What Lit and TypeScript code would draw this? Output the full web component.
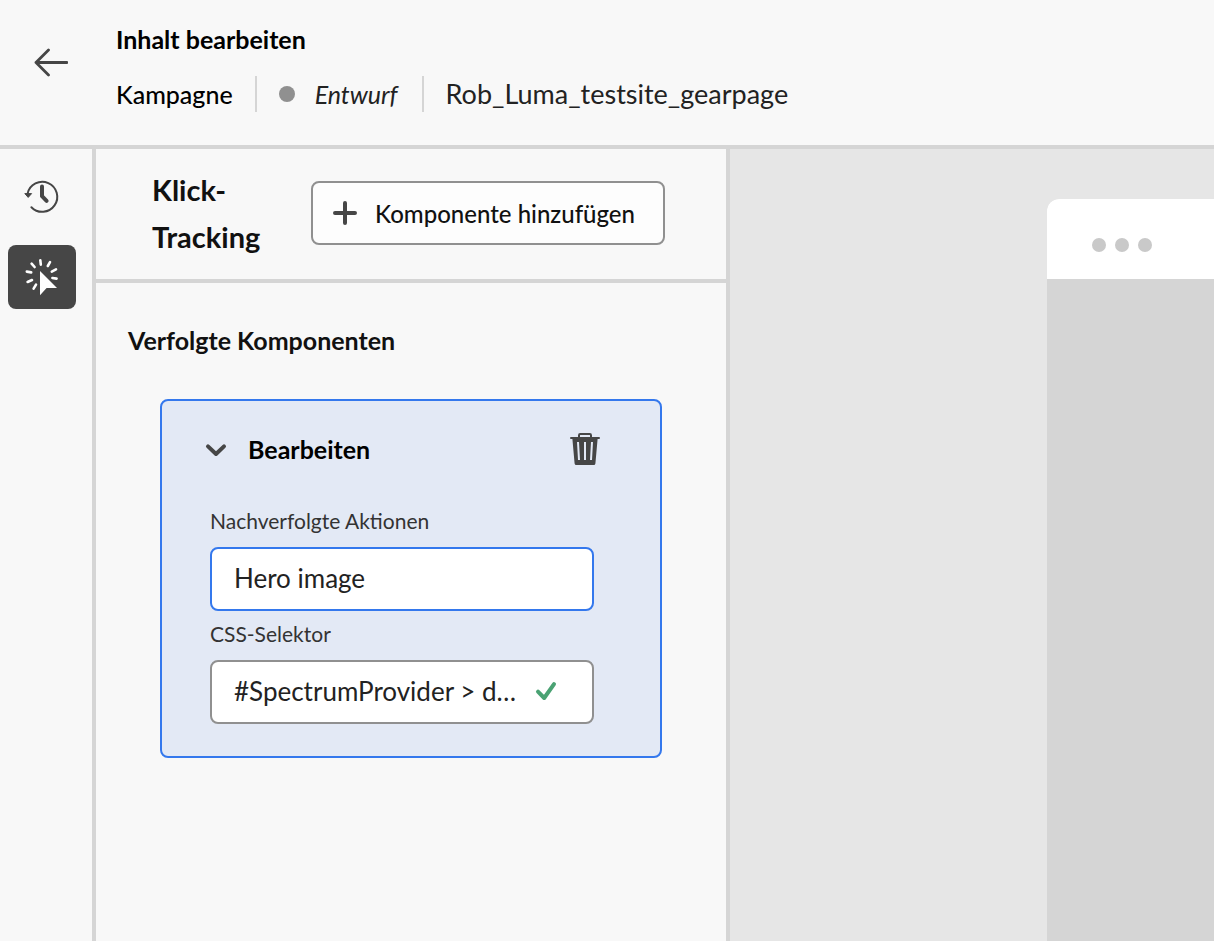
import { LitElement, html, css } from "lit";
import { customElement, state } from "lit/decorators.js";

@customElement("edit-header")
class EditHeader extends LitElement {
  static styles = css`
    :host {
      display: block;
      background: #f8f8f8;
      border-bottom: 4px solid #d5d5d5;
    }
    .bar {
      display: flex;
      align-items: flex-start;
      min-height: 145px;
      box-sizing: border-box;
      padding: 19px 32px 0;
      gap: 48px;
    }
    .back {
      border: 0;
      padding: 0;
      margin-top: 25px;
      background: none;
      cursor: pointer;
      width: 36px;
      height: 36px;
    }
    .back svg {
      display: block;
    }
    .title {
      margin: 0;
      font-size: 25px;
      line-height: 40px;
      font-weight: 700;
      color: #000;
    }
    .meta {
      display: flex;
      align-items: center;
      gap: 22px;
      margin-top: 15px;
      font-size: 27px;
      line-height: 40px;
      color: #222;
    }
    .kind {
      font-size: 25px;
      font-weight: 500;
      color: #000;
    }
    .status {
      display: flex;
      align-items: center;
      gap: 20px;
      padding: 0 24px 0 22px;
      height: 36px;
      border-left: 2px solid #d5d5d5;
      border-right: 2px solid #d5d5d5;
      font-size: 25px;
      font-style: italic;
    }
    .dot {
      width: 16px;
      height: 16px;
      border-radius: 50%;
      background: #909090;
    }
  `;

  render() {
    return html`
      <header class="bar">
        <button class="back" aria-label="Zurück">
          <svg width="36" height="36" viewBox="0 0 36 36" fill="none" stroke="#464646" stroke-width="2.8" stroke-linecap="round" stroke-linejoin="round">
            <path d="M35 18.5H4M16.5 6L4 18.5L16.5 31" />
          </svg>
        </button>
        <div>
          <h1 class="title">Inhalt bearbeiten</h1>
          <div class="meta">
            <span class="kind">Kampagne</span>
            <span class="status"><span class="dot"></span>Entwurf</span>
            <span>Rob_Luma_testsite_gearpage</span>
          </div>
        </div>
      </header>
    `;
  }
}

@customElement("tool-rail")
class ToolRail extends LitElement {
  static styles = css`
    :host {
      display: block;
      background: #f8f8f8;
      border-right: 4px solid #d5d5d5;
    }
    .rail {
      display: flex;
      flex-direction: column;
      gap: 16px;
      padding: 16px 16px 0 8px;
    }
    .tool {
      display: grid;
      place-items: center;
      width: 68px;
      height: 64px;
      padding: 0;
      border: 0;
      border-radius: 8px;
      background: none;
      cursor: pointer;
    }
    .active {
      background: #464646;
    }
  `;

  render() {
    return html`
      <nav class="rail">
        <button class="tool" aria-label="Verlauf">
          <svg width="36" height="36" viewBox="0 0 36 36" fill="none" stroke="#464646">
            <path d="M3.6 14.6A15 15 0 1 1 7.4 28.2" stroke-width="2" stroke-linecap="round" />
            <path d="M.8 14.6h6.8l-3.4 3.8z" fill="#464646" stroke-linejoin="round" />
            <path d="M18 7.6V17.2L22.6 21.8" stroke-width="4" stroke-linecap="round" stroke-linejoin="round" />
          </svg>
        </button>
        <button class="tool active" aria-label="Klick-Tracking" aria-pressed="true">
          <svg width="36" height="40" viewBox="0 0 36 40">
            <path d="M16 14V38.2L22.6 31H33Z" fill="#fff" />
            <path d="M16.3 3.2l.5 4.4M26 5.2L23.8 9M32 12.4l-4.2 2.2M32.6 21.6L28.4 21M7.6 6.6l3 3.4M2.8 14.6l4.4.8M3.6 25l4.4-2M9.6 31.6l2.4-4" fill="none" stroke="#fff" stroke-width="2.6" stroke-linecap="round" />
          </svg>
        </button>
      </nav>
    `;
  }
}

@customElement("tracked-card")
class TrackedCard extends LitElement {
  @state() action = "Hero image";
  @state() selector = "#SpectrumProvider > div > div > main";

  static styles = css`
    :host {
      display: block;
    }
    .card {
      background: #e3e9f5;
      border: 2px solid #3478ed;
      border-radius: 8px;
      padding: 26px 66px 32px 48px;
    }
    .head {
      display: flex;
      align-items: center;
      justify-content: space-between;
      height: 44px;
      margin: 0 -6px;
    }
    .toggle {
      display: flex;
      align-items: center;
      gap: 20px;
      border: 0;
      padding: 0;
      background: none;
      font: inherit;
      font-size: 25px;
      font-weight: 700;
      color: #000;
      cursor: pointer;
    }
    .delete {
      border: 0;
      padding: 0;
      background: none;
      cursor: pointer;
    }
    .delete svg,
    .toggle svg {
      display: block;
    }
    .label {
      display: block;
      font-size: 21px;
      line-height: 34px;
      padding-bottom: 9px;
      color: #333;
    }
    .first {
      margin-top: 33px;
    }
    .second {
      margin-top: 6px;
    }
    .field {
      display: flex;
      align-items: center;
      box-sizing: border-box;
      height: 64px;
      padding: 0 32px 2px 22px;
      background: #fff;
      border: 2px solid #909090;
      border-radius: 8px;
    }
    .focused {
      border-color: #3478ed;
    }
    .input {
      flex: 1;
      min-width: 0;
      border: 0;
      outline: 0;
      padding: 0;
      background: none;
      font: inherit;
      font-size: 26px;
      line-height: 36px;
      color: #222;
      text-overflow: ellipsis;
    }
    .check {
      flex: none;
      margin-left: 12px;
    }
  `;

  render() {
    return html`
      <section class="card">
        <div class="head">
          <button class="toggle" aria-expanded="true">
            <svg width="24" height="20" viewBox="0 0 24 20" fill="none" stroke="#464646" stroke-width="4" stroke-linecap="round" stroke-linejoin="round">
              <path d="M4 7.4l8 7.6 8-7.6" />
            </svg>
            Bearbeiten
          </button>
          <button class="delete" aria-label="Löschen">
            <svg width="30" height="34" viewBox="0 0 30 34">
              <path d="M9 5V3.2Q9 2 10.2 2H19.8Q21 2 21 3.2V5" fill="none" stroke="#464646" stroke-width="2" />
              <path fill="#464646" fill-rule="evenodd" d="M1 5H29Q30 5 30 6T29 7H27.6L25.4 31.4Q25.2 33 23.8 33H6.2Q4.8 33 4.6 31.4L2.4 7H1Q0 7 0 6T1 5ZM7 10L8 28H10L9 10ZM14 10V28H16V10ZM21 10L20 28H22L23 10Z" />
            </svg>
          </button>
        </div>
        <label class="label first" for="action">Nachverfolgte Aktionen</label>
        <div class="field focused">
          <input class="input" id="action" type="text" .value=${this.action} />
        </div>
        <label class="label second" for="selector">CSS-Selektor</label>
        <div class="field">
          <input class="input" id="selector" type="text" .value=${this.selector} />
          <svg class="check" width="28" height="24" viewBox="0 0 28 24" fill="none" stroke="#4aa273" stroke-width="4" stroke-linecap="round" stroke-linejoin="round">
            <path d="M6 12.6L12.2 19L22 5.2" />
          </svg>
        </div>
      </section>
    `;
  }
}

@customElement("tracking-panel")
class TrackingPanel extends LitElement {
  static styles = css`
    :host {
      display: block;
      background: #f8f8f8;
      border-right: 4px solid #d5d5d5;
    }
    .head {
      display: flex;
      align-items: center;
      justify-content: space-between;
      gap: 16px;
      min-height: 128px;
      padding: 0 61px 2px 56px;
      border-bottom: 4px solid #d5d5d5;
    }
    .title {
      margin: 0;
      flex: 1;
      font-size: 29px;
      line-height: 47px;
      font-weight: 700;
      color: #111;
    }
    .add {
      flex: none;
      display: flex;
      align-items: center;
      gap: 18px;
      height: 64px;
      padding: 0 28px 0 20px;
      border: 2px solid #909090;
      border-radius: 8px;
      background: #fdfdfd;
      font: inherit;
      font-size: 24px;
      font-weight: 500;
      color: #111;
      cursor: pointer;
    }
    .body {
      padding: 37px 64px 0 32px;
    }
    .subtitle {
      margin: 0 0 39px;
      font-size: 25px;
      line-height: 40px;
      font-weight: 700;
      color: #111;
    }
    .list {
      padding-left: 32px;
    }
  `;

  render() {
    return html`
      <div class="head">
        <h2 class="title">Klick-<br />Tracking</h2>
        <button class="add">
          <svg width="24" height="24" viewBox="0 0 24 24" fill="none" stroke="#464646" stroke-width="4" stroke-linecap="round">
            <path d="M12 2V22M2 12H22" />
          </svg>
          Komponente hinzufügen
        </button>
      </div>
      <div class="body">
        <h3 class="subtitle">Verfolgte Komponenten</h3>
        <div class="list"><tracked-card></tracked-card></div>
      </div>
    `;
  }
}

@customElement("page-preview")
class PagePreview extends LitElement {
  static styles = css`
    :host {
      display: flex;
      background: #e6e6e6;
      padding: 50px 0 0 317px;
      box-sizing: border-box;
    }
    .window {
      flex: 1;
      display: flex;
      flex-direction: column;
      border-top-left-radius: 12px;
      overflow: hidden;
      background: #d5d5d5;
    }
    .chrome {
      display: flex;
      align-items: center;
      gap: 9px;
      height: 80px;
      padding: 12px 0 0 45px;
      box-sizing: border-box;
      background: #fff;
    }
    .dot {
      width: 14px;
      height: 14px;
      border-radius: 50%;
      background: #c9c9c9;
    }
  `;

  render() {
    return html`
      <div class="window">
        <div class="chrome">
          <span class="dot"></span><span class="dot"></span><span class="dot"></span>
        </div>
      </div>
    `;
  }
}

@customElement("app-root")
class AppRoot extends LitElement {
  static styles = css`
    :host {
      display: flex;
      flex-direction: column;
      min-height: 100vh;
      font-family: Lato, "Noto Sans", sans-serif;
      background: #f8f8f8;
    }
    .workspace {
      flex: 1;
      display: grid;
      grid-template-columns: auto minmax(520px, 634px) minmax(0, 1fr);
    }
  `;

  render() {
    return html`
      <edit-header></edit-header>
      <main class="workspace">
        <tool-rail></tool-rail>
        <tracking-panel></tracking-panel>
        <page-preview></page-preview>
      </main>
    `;
  }
}
